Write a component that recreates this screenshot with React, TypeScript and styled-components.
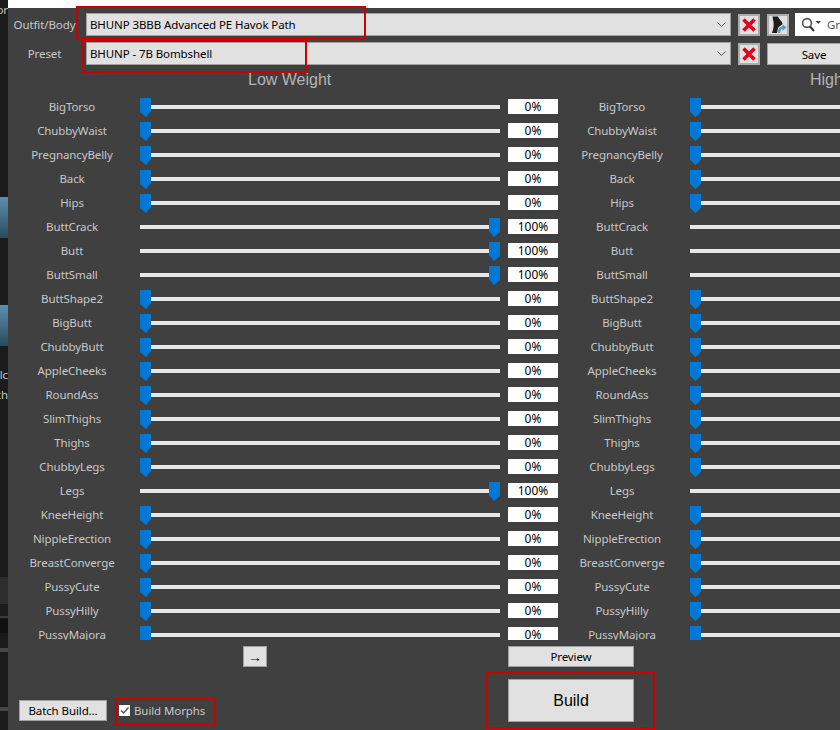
import React from 'react';
import styled, { createGlobalStyle } from 'styled-components';

const UI_FONT = '"Noto Sans", "Open Sans", sans-serif';

const GlobalStyle = createGlobalStyle`
    html, body {
        margin: 0;
        padding: 0;
        height: 730px;
        overflow: hidden;
        background: #404040;
        font-family: ${UI_FONT};
        font-size: 11.5px;
        letter-spacing: -0.1px;
    }
    * {
        box-sizing: border-box;
    }
`;

const Page = styled.div`
    position: relative;
    display: flex;
    width: 840px;
    height: 730px;
    overflow: hidden;
`;

// desktop behind the window, only a sliver of it shows
const BackStrip = styled.div`
    flex: 0 0 8px;
    display: flex;
    flex-direction: column;
    background: #1b1b1b;
    overflow: hidden;
`;

const StripText = styled.div<{ $top: number }>`
    margin-top: ${p => p.$top}px;
    height: 16px;
    line-height: 16px;
    color: #c4c4c4;
    white-space: nowrap;
    display: flex;
    justify-content: flex-end;
`;

const StripThumb = styled.div<{ $top: number }>`
    margin-top: ${p => p.$top}px;
    height: 41px;
    flex-shrink: 0;
    background: linear-gradient(#5c8fae, #2b4a5f);
`;

const StripBand = styled.div<{ $top: number; $height: number; $color: string }>`
    margin-top: ${p => p.$top}px;
    height: ${p => p.$height}px;
    flex-shrink: 0;
    background: ${p => p.$color};
`;

const Column = styled.div`
    flex: 1;
    min-width: 0;
    display: flex;
    flex-direction: column;
`;

const WhiteTop = styled.div`
    height: 8px;
    flex-shrink: 0;
    background: #fff;
`;

const Window = styled.div`
    flex: 1;
    display: flex;
    flex-direction: column;
    background: #404040;
    overflow: hidden;
`;

const HeaderRow = styled.div<{ $top: number }>`
    display: flex;
    align-items: center;
    width: 900px;
    height: 23px;
    margin-top: ${p => p.$top}px;
    flex-shrink: 0;
`;

const FieldLabel = styled.div`
    flex: 0 0 73px;
    margin-right: 5px;
    text-align: center;
    color: #c8c8c8;
    white-space: nowrap;
`;

const Combo = styled.div`
    flex: 0 0 645px;
    height: 23px;
    margin-right: 7px;
    display: flex;
    align-items: center;
    justify-content: space-between;
    padding: 0 4px 0 3px;
    background: #e1e1e1;
    border: 1px solid #a0a0a0;
    color: #000;
`;

const SquareButton = styled.div<{ $gap: number }>`
    flex: 0 0 22px;
    height: 22px;
    margin-top: 1px;
    margin-right: ${p => p.$gap}px;
    display: flex;
    align-items: center;
    justify-content: center;
    background: #e1e1e1;
    border: 2px solid #adadad;
`;

const SearchBox = styled.div`
    flex: 0 0 60px;
    height: 23px;
    display: flex;
    align-items: center;
    padding-left: 6px;
    gap: 6px;
    background: #fff;
    color: #555;
`;

const Button = styled.div<{ $size?: number }>`
    display: flex;
    align-items: center;
    justify-content: center;
    background: #e1e1e1;
    border: 1px solid #a0a0a0;
    font-size: ${p => p.$size ?? 11.5}px;
    color: #000;
    white-space: nowrap;
`;

const SaveButton = styled(Button)`
    flex: 0 0 94px;
    height: 22px;
    margin-top: 1px;
`;

const Panel = styled.div`
    display: flex;
    width: 1100px;
    height: 569px;
    margin-top: 6px;
    flex-shrink: 0;
    overflow: hidden;
`;

const WeightColumn = styled.div`
    flex: 0 0 550px;
    display: flex;
    flex-direction: column;
`;

const WeightTitle = styled.div<{ $indent: number }>`
    height: 24px;
    flex-shrink: 0;
    line-height: 18px;
    padding-left: ${p => p.$indent}px;
    font-family: "Liberation Sans", Arial, sans-serif;
    font-size: 16px;
    letter-spacing: 0;
    color: #b4b4b4;
    white-space: nowrap;
`;

const SliderRow = styled.div`
    display: flex;
    align-items: flex-start;
    height: 24px;
    flex-shrink: 0;
`;

const SliderLabel = styled.div`
    flex: 0 0 128px;
    height: 24px;
    line-height: 24px;
    margin-right: 4px;
    text-align: center;
    color: #c8c8c8;
    white-space: nowrap;
`;

const Slider = styled.div<{ $full: boolean }>`
    flex: 0 0 360px;
    display: flex;
    flex-direction: ${p => (p.$full ? 'row-reverse' : 'row')};
    margin-top: 3px;
    margin-right: 8px;
`;

const Thumb = styled.div`
    flex: 0 0 11px;
    height: 19px;
    background: #0078d7;
    clip-path: polygon(0 0, 100% 0, 100% 72%, 50% 100%, 0 72%);
`;

const Track = styled.div`
    flex: 1;
    height: 4px;
    margin-top: 7px;
    background: #e7e7e7;
`;

const ValueBox = styled.div`
    flex: 0 0 50px;
    height: 15px;
    margin-top: 4px;
    line-height: 15px;
    text-align: center;
    background: #fff;
    font-size: 12px;
    letter-spacing: 0;
    color: #000;
`;

const Footer = styled.div`
    display: flex;
    flex-shrink: 0;
    margin-top: 6px;
`;

const FooterLeft = styled.div`
    flex: 0 0 500px;
    display: flex;
    flex-direction: column;
`;

const ArrowButton = styled(Button)`
    width: 24px;
    height: 21px;
    margin-left: 235px;
    font-family: "Liberation Sans", Arial, sans-serif;
`;

const BuildOptions = styled.div`
    display: flex;
    align-items: center;
    margin-top: 33px;
    margin-left: 11px;
`;

const BatchButton = styled(Button)`
    width: 88px;
    height: 21px;
    margin-right: 12px;
`;

const CheckBox = styled.div`
    width: 11px;
    height: 11px;
    margin-right: 4px;
    display: flex;
    align-items: center;
    justify-content: center;
    background: #fff;
`;

const CheckLabel = styled.div`
    color: #c8c8c8;
    white-space: nowrap;
`;

const FooterRight = styled.div`
    flex: 0 0 126px;
    display: flex;
    flex-direction: column;
    gap: 12px;
`;

const PreviewButton = styled(Button)`
    height: 21px;
`;

const BuildButton = styled(Button)`
    height: 43px;
    font-family: "Liberation Sans", Arial, sans-serif;
    letter-spacing: 0;
`;

// red annotation boxes drawn over the screenshot
const Highlight = styled.div<{ $x: number; $y: number; $w: number; $h: number }>`
    position: absolute;
    left: ${p => p.$x}px;
    top: ${p => p.$y}px;
    width: ${p => p.$w}px;
    height: ${p => p.$h}px;
    border: 2px solid #cc0000;
    pointer-events: none;
`;

const Chevron = () => (
    <svg width="9" height="5" viewBox="0 0 9 5">
        <path d="M0.5 0.5 L4.5 4.5 L8.5 0.5" fill="none" stroke="#555" strokeWidth="1" />
    </svg>
);

const RedCross = () => (
    <svg width="14" height="14" viewBox="0 0 14 14">
        <path d="M1.5 1.5 L12.5 12.5 M12.5 1.5 L1.5 12.5" fill="none" stroke="#e2001a" strokeWidth="3.6" />
    </svg>
);

const BodyIcon = () => (
    <svg width="18" height="18" viewBox="0 0 18 18">
        <path d="M3.5 0.5 L9 0.5 C10 3.5 13.5 5.5 13.5 7.5 C13 9.5 10 10 9 12 L8 17 L3 17 C4.5 13 5 9 4.5 6 C4 4 3.8 2.5 3.5 0.5 Z" fill="#1d1d1d" />
        <path d="M10 17 C10 13.5 11.5 11.5 14 11.5" fill="none" stroke="#5f9fc4" strokeWidth="2.6" />
        <path d="M13.5 8 L17.5 11.5 L13.5 15 Z" fill="#5f9fc4" />
    </svg>
);

const SearchIcon = () => (
    <svg width="20" height="15" viewBox="0 0 20 15">
        <circle cx="6" cy="6" r="4.4" fill="none" stroke="#555" strokeWidth="1.6" />
        <path d="M9 9.5 L13 14" stroke="#333" strokeWidth="2" />
        <path d="M14.5 4 H20 L17.2 7 Z" fill="#444" />
    </svg>
);

const CheckMark = () => (
    <svg width="11" height="11" viewBox="0 0 11 11">
        <path d="M2 5.5 L4.5 8 L9.5 2.5" fill="none" stroke="#555" strokeWidth="1.4" />
    </svg>
);

interface Morph {
    name: string;
    full?: boolean;
}

const morphs: Morph[] = [
    { name: 'BigTorso' },
    { name: 'ChubbyWaist' },
    { name: 'PregnancyBelly' },
    { name: 'Back' },
    { name: 'Hips' },
    { name: 'ButtCrack', full: true },
    { name: 'Butt', full: true },
    { name: 'ButtSmall', full: true },
    { name: 'ButtShape2' },
    { name: 'BigButt' },
    { name: 'ChubbyButt' },
    { name: 'AppleCheeks' },
    { name: 'RoundAss' },
    { name: 'SlimThighs' },
    { name: 'Thighs' },
    { name: 'ChubbyLegs' },
    { name: 'Legs', full: true },
    { name: 'KneeHeight' },
    { name: 'NippleErection' },
    { name: 'BreastConverge' },
    { name: 'PussyCute' },
    { name: 'PussyHilly' },
    { name: 'PussyMajora' },
];

const WeightSliders = ({ title, indent }: { title: string; indent: number }) => (
    <WeightColumn>
        <WeightTitle $indent={indent}>{title}</WeightTitle>
        {morphs.map(morph => (
            <SliderRow key={morph.name}>
                <SliderLabel>{morph.name}</SliderLabel>
                <Slider $full={!!morph.full}>
                    <Thumb />
                    <Track />
                </Slider>
                <ValueBox>{morph.full ? '100%' : '0%'}</ValueBox>
            </SliderRow>
        ))}
    </WeightColumn>
);

export default function App() {
    return (
        <Page>
            <GlobalStyle />
            <BackStrip>
                <StripText $top={2}>or</StripText>
                <StripThumb $top={179} />
                <StripThumb $top={67} />
                <StripText $top={21}>lc</StripText>
                <StripText $top={4}>ch</StripText>
                <StripBand $top={174} $height={27} $color="#2e2e2e" />
                <StripBand $top={12} $height={2} $color="#3a3a3a" />
                <StripBand $top={1} $height={14} $color="#101010" />
                <StripBand $top={15} $height={4} $color="#474747" />
                <StripBand $top={55} $height={4} $color="#474747" />
            </BackStrip>
            <Column>
                <WhiteTop />
                <Window>
                    <HeaderRow $top={5}>
                        <FieldLabel>Outfit/Body</FieldLabel>
                        <Combo>
                            <span>BHUNP 3BBB Advanced PE Havok Path</span>
                            <Chevron />
                        </Combo>
                        <SquareButton $gap={7}><RedCross /></SquareButton>
                        <SquareButton $gap={6}><BodyIcon /></SquareButton>
                        <SearchBox>
                            <SearchIcon />
                            <span>Gr</span>
                        </SearchBox>
                    </HeaderRow>
                    <HeaderRow $top={6}>
                        <FieldLabel>Preset</FieldLabel>
                        <Combo>
                            <span>BHUNP - 7B Bombshell</span>
                            <Chevron />
                        </Combo>
                        <SquareButton $gap={7}><RedCross /></SquareButton>
                        <SaveButton>Save</SaveButton>
                    </HeaderRow>
                    <Panel>
                        <WeightSliders title="Low Weight" indent={240} />
                        <WeightSliders title="High Weight" indent={252} />
                    </Panel>
                    <Footer>
                        <FooterLeft>
                            <ArrowButton $size={14}>→</ArrowButton>
                            <BuildOptions>
                                <BatchButton>Batch Build...</BatchButton>
                                <CheckBox><CheckMark /></CheckBox>
                                <CheckLabel>Build Morphs</CheckLabel>
                            </BuildOptions>
                        </FooterLeft>
                        <FooterRight>
                            <PreviewButton>Preview</PreviewButton>
                            <BuildButton $size={16}>Build</BuildButton>
                        </FooterRight>
                    </Footer>
                </Window>
            </Column>
            <Highlight $x={76} $y={6} $w={290} $h={33} />
            <Highlight $x={82} $y={40} $w={225} $h={33} />
            <Highlight $x={115} $y={698} $w={101} $h={28} />
            <Highlight $x={486} $y={672} $w={169} $h={57} />
        </Page>
    );
}
